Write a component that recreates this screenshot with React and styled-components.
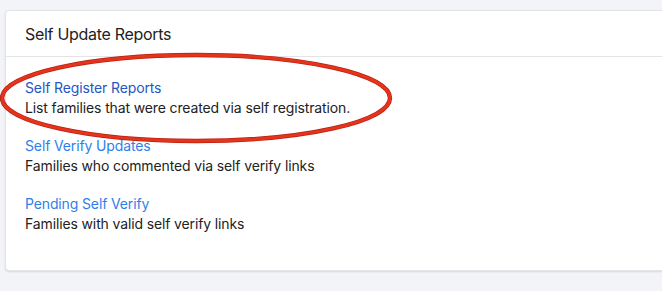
import styled, { createGlobalStyle } from 'styled-components'

const GlobalStyle = createGlobalStyle`
    html, body {
        margin: 0;
        padding: 0;
        background-color: #f3f4f8;
        font-family: Inter, "Liberation Sans", Arial, sans-serif;
        overflow: hidden;
    }
`

const reports = [
    { title: 'Self Register Reports', text: 'List families that were created via self registration.', visited: true },
    { title: 'Self Verify Updates', text: 'Families who commented via self verify links' },
    { title: 'Pending Self Verify', text: 'Families with valid self verify links' },
]

const App = () => {
    return (
        <>
            <GlobalStyle />
            <Page>
                <Card>
                    <Header>Self Update Reports</Header>
                    <Body>
                        {reports.map(r => (
                            <Item key={r.title}>
                                <Link href="#" $visited={r.visited}>{r.title}</Link>
                                <Desc>{r.text}</Desc>
                            </Item>
                        ))}
                    </Body>
                </Card>
                <Circle viewBox="0 0 400 100" width="400" height="100">
                    <ellipse cx="196" cy="48" rx="194" ry="43" fill="none" stroke="#b8200f" strokeWidth="4.4" />
                    <ellipse cx="196" cy="48" rx="194" ry="43" fill="none" stroke="#e5341d" strokeWidth="3" />
                </Circle>
            </Page>
        </>
    )
}

export default App

const Page = styled.div`
    position: relative;
    padding: 10px 0 0 5px;
    height: 291px;
    box-sizing: border-box;
`

const Card = styled.div`
    margin-right: -10px;
    background-color: #fff;
    border: 1px solid #e2e4e9;
    border-radius: 4px;
    box-shadow: 0 1px 2px rgba(0,0,0,0.12);
`

const Header = styled.div`
    height: 45px;
    display: flex;
    align-items: center;
    padding-left: 19px;
    font-size: 16px;
    letter-spacing: -0.3px;
    color: #222;
    border-bottom: 1px solid #e2e4e9;
`

const Body = styled.div`
    padding: 21px 19px 18px;
`

const Item = styled.div`
    display: flex;
    flex-direction: column;
    margin-bottom: 18px;
`

const Link = styled.a`
    font-size: 14px;
    line-height: 20px;
    letter-spacing: -0.13px;
    color: ${p => p.$visited ? '#2556c4' : '#2f7fe9'};
    text-decoration: none;
`

const Desc = styled.div`
    font-size: 14px;
    line-height: 20px;
    letter-spacing: -0.13px;
    color: #222;
`

const Circle = styled.svg`
    position: absolute;
    left: 0;
    top: 50px;
    pointer-events: none;
`
